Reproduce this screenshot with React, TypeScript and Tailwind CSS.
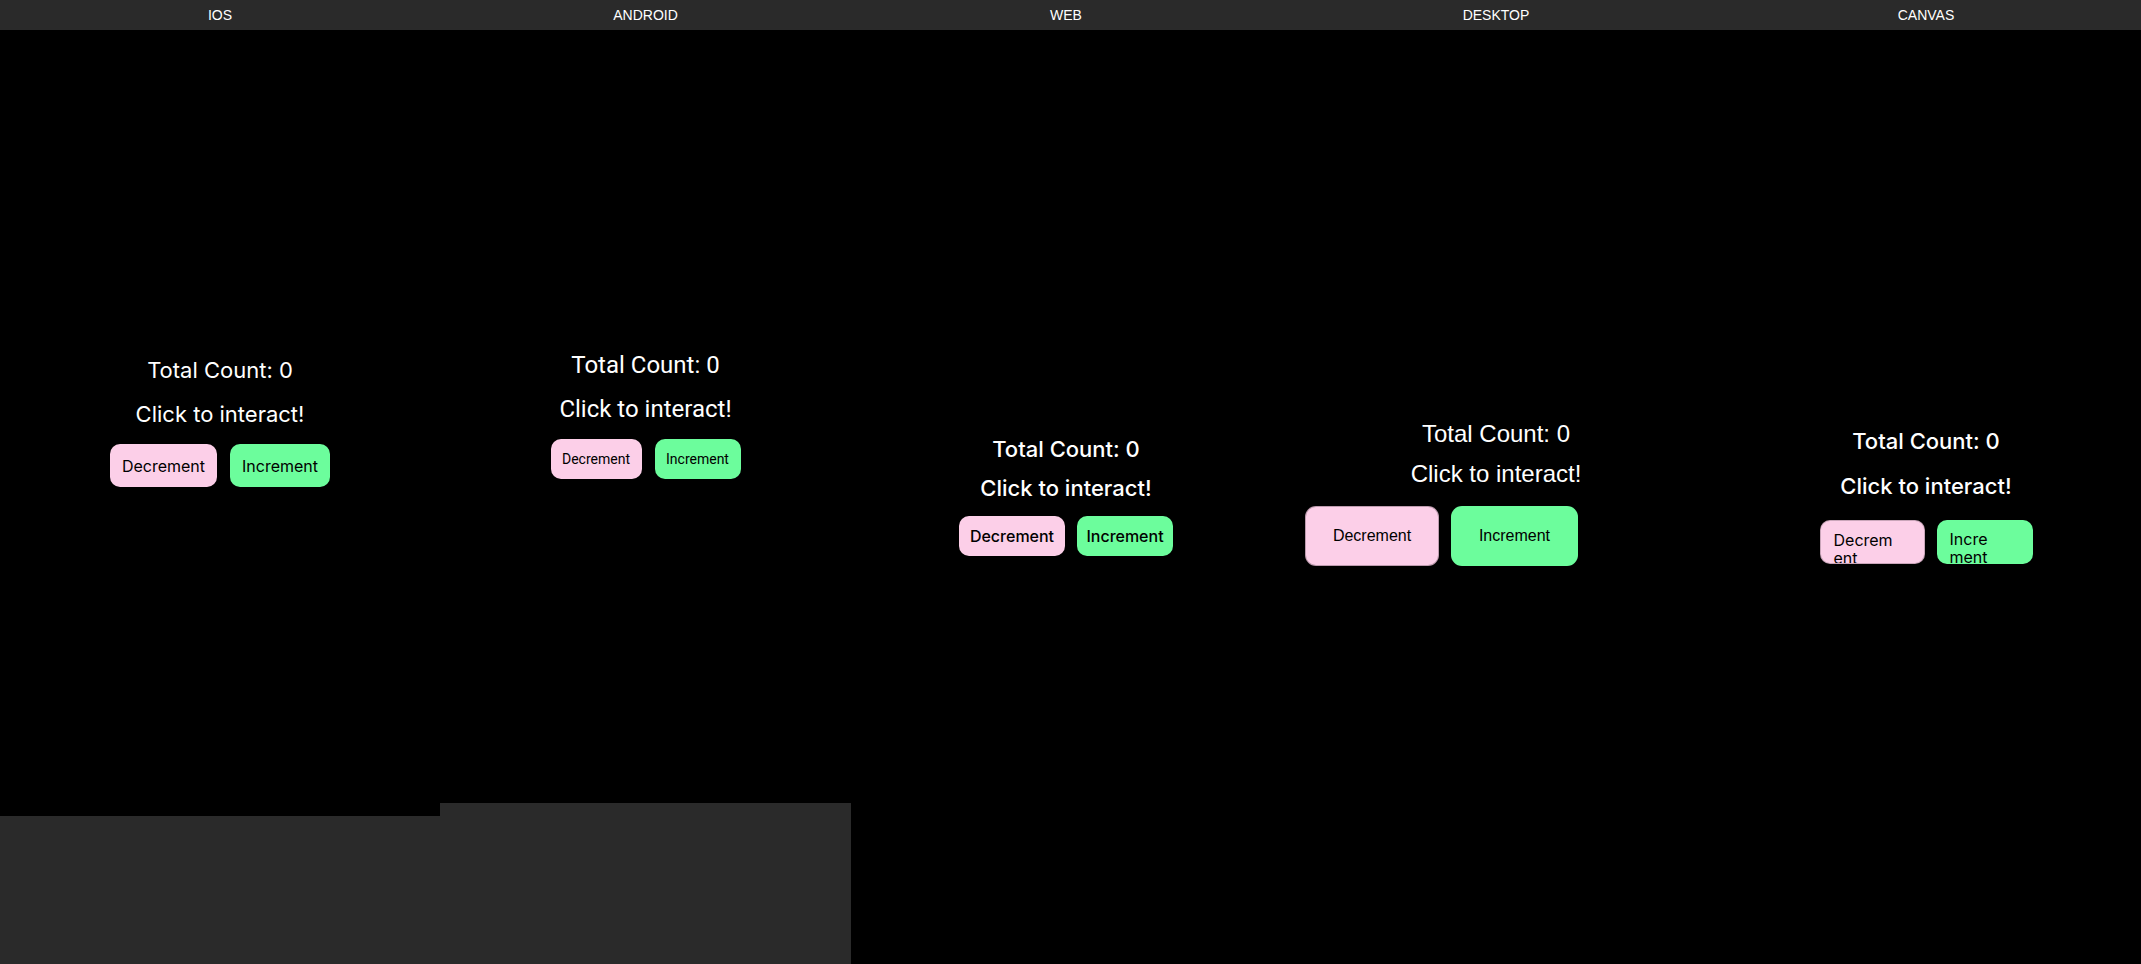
import { useState } from "react";

function useCounter() {
  const [count, setCount] = useState(0);
  return {
    count,
    dec: () => setCount((c) => c - 1),
    inc: () => setCount((c) => c + 1),
  };
}

function IosPane() {
  const { count, dec, inc } = useCounter();
  return (
    <section className="flex h-[786px] w-[440px] shrink-0 flex-col items-center justify-center gap-4 bg-black pb-[3px] font-['Inter',sans-serif] text-white">
      <h2 className="text-[22px] leading-[28px]">Total Count: {count}</h2>
      <p className="text-[22px] leading-[28px]">Click to interact!</p>
      <div className="flex gap-[13px]">
        <button
          onClick={dec}
          className="flex h-[43px] w-[107px] items-center justify-center rounded-[10px] bg-[#fccfe8] text-[16px] text-black"
        >
          Decrement
        </button>
        <button
          onClick={inc}
          className="flex h-[43px] w-[100px] items-center justify-center rounded-[10px] bg-[#6cfd9c] text-[16px] text-black"
        >
          Increment
        </button>
      </div>
    </section>
  );
}

function AndroidPane() {
  const { count, dec, inc } = useCounter();
  return (
    <section className="flex h-[773px] w-[411px] shrink-0 flex-col items-center justify-center gap-4 bg-black pb-[3px] font-['Roboto',sans-serif] text-white">
      <h2 className="text-[24px] leading-[28px]">Total Count: {count}</h2>
      <p className="text-[24px] leading-[28px]">Click to interact!</p>
      <div className="flex gap-[13px]">
        <button
          onClick={dec}
          className="flex h-[40px] w-[91px] items-center justify-center rounded-[10px] bg-[#fccfe8] text-[14px] text-black"
        >
          Decrement
        </button>
        <button
          onClick={inc}
          className="flex h-[40px] w-[86px] items-center justify-center rounded-[10px] bg-[#6cfd9c] text-[14px] text-black"
        >
          Increment
        </button>
      </div>
    </section>
  );
}

function WebPane() {
  const { count, dec, inc } = useCounter();
  return (
    <section className="flex flex-col items-center justify-center bg-black pb-[3px] font-['Inter',sans-serif] font-medium text-white">
      <h2 className="text-[22px] leading-[28px]">Total Count: {count}</h2>
      <p className="mt-[11px] text-[22px] leading-[28px]">Click to interact!</p>
      <div className="mt-[14px] flex gap-[12px]">
        <button
          onClick={dec}
          className="flex h-[40px] w-[106px] items-center justify-center rounded-[10px] bg-[#fccfe8] text-[16px] text-black"
        >
          Decrement
        </button>
        <button
          onClick={inc}
          className="flex h-[40px] w-[96px] items-center justify-center rounded-[10px] bg-[#6cfd9c] text-[16px] text-black"
        >
          Increment
        </button>
      </div>
    </section>
  );
}

function DesktopPane() {
  const { count, dec, inc } = useCounter();
  return (
    <section className="flex flex-col justify-center bg-black px-6 pb-[8px] font-['Liberation_Sans',Arial,sans-serif] text-white">
      <h2 className="text-center text-[24px] leading-[28px]">Total Count: {count}</h2>
      <p className="mt-[12px] text-center text-[24px] leading-[28px]">Click to interact!</p>
      <div className="mt-[18px] flex gap-[12px]">
        <button
          onClick={dec}
          className="flex h-[60px] w-[134px] items-center justify-center rounded-[11px] border border-black/25 bg-[#fccfe8] text-[16px] text-black"
        >
          Decrement
        </button>
        <button
          onClick={inc}
          className="flex h-[60px] w-[127px] items-center justify-center rounded-[11px] bg-[#6cfd9c] text-[16px] text-black"
        >
          Increment
        </button>
      </div>
    </section>
  );
}

function CanvasPane() {
  const { count, dec, inc } = useCounter();
  return (
    <section className="flex flex-col items-center justify-center bg-black pb-[3px] font-['Inter',sans-serif] text-white">
      <h2 className="text-[22px] font-medium leading-[28px]">Total Count: {count}</h2>
      <p className="mt-[17px] text-[22px] font-medium leading-[28px]">Click to interact!</p>
      <div className="mt-[20px] flex gap-[12px]">
        <button
          onClick={dec}
          className="h-[44px] w-[105px] overflow-hidden rounded-[10px] border border-black/20 bg-[#fccfe8] pl-[13px] pt-[10px] text-left text-[16px] leading-[18px] text-black"
        >
          <span className="block w-[64px] break-all">Decrement</span>
        </button>
        <button
          onClick={inc}
          className="h-[44px] w-[96px] overflow-hidden rounded-[10px] bg-[#6cfd9c] pl-[13px] pt-[10px] text-left text-[16px] leading-[18px] text-black"
        >
          <span className="block w-[46px] break-all">Increment</span>
        </button>
      </div>
    </section>
  );
}

export default function App() {
  return (
    <div className="flex h-[964px] flex-col bg-[#2a2a2a]">
      <header className="grid h-[30px] shrink-0 grid-cols-[440px_411px_1fr_1fr_1fr] font-['Liberation_Sans',Arial,sans-serif] text-[14px] text-white">
        <div className="flex items-center justify-center">IOS</div>
        <div className="flex items-center justify-center">ANDROID</div>
        <div className="flex items-center justify-center">WEB</div>
        <div className="flex items-center justify-center">DESKTOP</div>
        <div className="flex items-center justify-center">CANVAS</div>
      </header>
      <main className="flex flex-1 items-start">
        <IosPane />
        <AndroidPane />
        <div className="grid flex-1 grid-cols-3 self-stretch">
          <WebPane />
          <DesktopPane />
          <CanvasPane />
        </div>
      </main>
    </div>
  );
}
